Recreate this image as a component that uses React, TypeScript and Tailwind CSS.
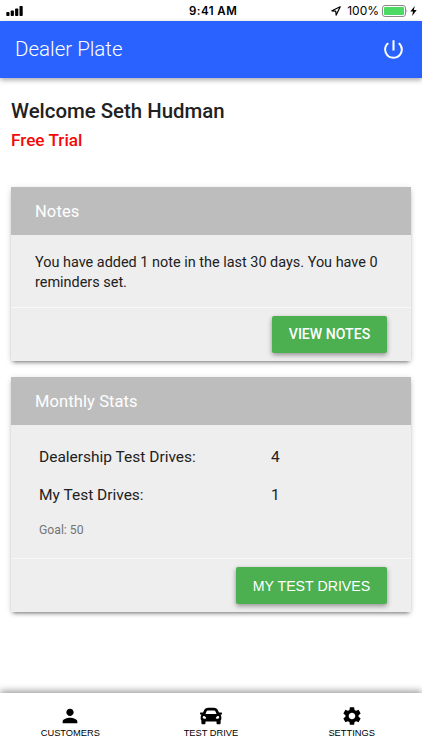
import React from "react";
import { FaCar } from "react-icons/fa";
import { MdPerson, MdPowerSettingsNew, MdSettings } from "react-icons/md";

function StatusBar() {
  return (
    <div className="relative flex h-[21px] shrink-0 items-center justify-between bg-white pl-[6px] pr-[5px] font-[Inter,sans-serif] text-black">
      <svg width="17" height="10" viewBox="0 0 17 10">
        <rect x="0.3" y="6" width="3.2" height="4" rx="0.8" />
        <rect x="4.7" y="4.4" width="3.2" height="5.6" rx="0.8" />
        <rect x="9.1" y="2.4" width="3.2" height="7.6" rx="0.8" />
        <rect x="13.5" y="0" width="3.2" height="10" rx="0.8" />
      </svg>
      <span className="absolute left-[189px] top-[3px] text-[11.5px] font-semibold leading-4 tracking-[0.45px]">9:41 AM</span>
      <div className="flex items-center">
        <svg width="10" height="10" viewBox="0 0 10 10" fill="none" stroke="black" strokeWidth="1.2" strokeLinejoin="round">
          <path d="M9.2 0.8 L0.9 4.8 L4.7 5.2 L5.2 9.1 Z" />
        </svg>
        <span className="ml-[6px] text-[12px] leading-4">100%</span>
        <svg className="ml-[3px]" width="26" height="12" viewBox="0 0 26 12">
          <rect x="0.5" y="0.5" width="23" height="11" rx="2.5" fill="white" stroke="#8a8a8a" />
          <rect x="2" y="2" width="20" height="8" rx="1" fill="#4cd964" />
          <path d="M24.6 4.1 Q26 6 24.6 7.9 Z" fill="#8a8a8a" />
        </svg>
        <svg className="ml-[2px]" width="7" height="10" viewBox="0 0 7 10">
          <path d="M4.8 0 L0.3 5.6 H3 L2.1 10 L6.7 4.1 H3.8 Z" />
        </svg>
      </div>
    </div>
  );
}

function Card({ title, children, action }: { title: string; children: React.ReactNode; action: React.ReactNode }) {
  return (
    <section className="bg-[#eeeeee] shadow-[0_3px_4px_-2px_rgba(0,0,0,0.5),0_1px_6px_rgba(0,0,0,0.13)]">
      <h2 className="flex h-12 items-center bg-[#bdbdbd] pl-6 pt-[2px] text-[16.5px] tracking-[0.1px] text-white">{title}</h2>
      {children}
      <div className="flex h-[54px] justify-end border-t border-[#f8f8f8] pr-6 pt-2">{action}</div>
    </section>
  );
}

export default function App() {
  return (
    <div className="flex h-[750px] w-[422px] flex-col overflow-hidden bg-white font-[Roboto,sans-serif] text-[#212121]">
      <StatusBar />
      <header className="z-10 flex h-[57px] shrink-0 items-center justify-between bg-[#2962ff] pl-[15px] pr-4 text-white shadow-[0_2px_5px_rgba(0,0,0,0.35)]">
        <h1 className="text-[20.5px] font-light">Dealer Plate</h1>
        <MdPowerSettingsNew size={25} />
      </header>

      <main className="flex-1 px-[11px] pt-[21px]">
        <p className="text-[20.4px] font-medium leading-6">Welcome Seth Hudman</p>
        <p className="mt-[5px] text-[17.2px] font-medium leading-6 text-[#f50808]">Free Trial</p>

        <div className="mt-[35px] flex flex-col gap-4">
          <Card
            title="Notes"
            action={
              <button className="h-[37px] w-[115px] rounded-[2px] bg-[#4caf50] text-[14.1px] font-medium text-white shadow-[0_2px_5px_rgba(0,0,0,0.4)]">
                VIEW NOTES
              </button>
            }
          >
            <p className="h-[72px] pl-6 pr-5 pt-[18px] text-[14.45px] leading-[19.5px]">
              You have added 1 note in the last 30 days. You have 0 reminders set.
            </p>
          </Card>

          <Card
            title="Monthly Stats"
            action={
              <button className="h-[37px] w-[151px] rounded-[2px] bg-[#4caf50] pt-[2px] font-['Liberation_Sans',sans-serif] text-[14.2px] text-white shadow-[0_2px_5px_rgba(0,0,0,0.4)]">
                MY TEST DRIVES
              </button>
            }
          >
            <div className="grid h-[133px] grid-cols-[232px_1fr] content-start pl-[28px] pt-5 text-[15.5px]">
              <span className="h-[38px] leading-6">Dealership Test Drives:</span>
              <span className="leading-6">4</span>
              <span className="h-[37px] leading-6">My Test Drives:</span>
              <span className="leading-6">1</span>
              <span className="text-[12.2px] leading-5 text-[#757575]">Goal: 50</span>
            </div>
          </Card>
        </div>
      </main>

      <nav className="z-10 grid h-[57px] shrink-0 grid-cols-3 bg-white font-['Liberation_Sans',sans-serif] text-[9.3px] leading-3 text-black shadow-[0_-2px_7px_rgba(0,0,0,0.4)]">
        <div className="flex flex-col items-center pt-3">
          <MdPerson size={22} />
          CUSTOMERS
        </div>
        <div className="flex flex-col items-center pt-3">
          <FaCar size={22} />
          TEST DRIVE
        </div>
        <div className="flex flex-col items-center pt-3">
          <MdSettings size={22} />
          SETTINGS
        </div>
      </nav>
    </div>
  );
}
